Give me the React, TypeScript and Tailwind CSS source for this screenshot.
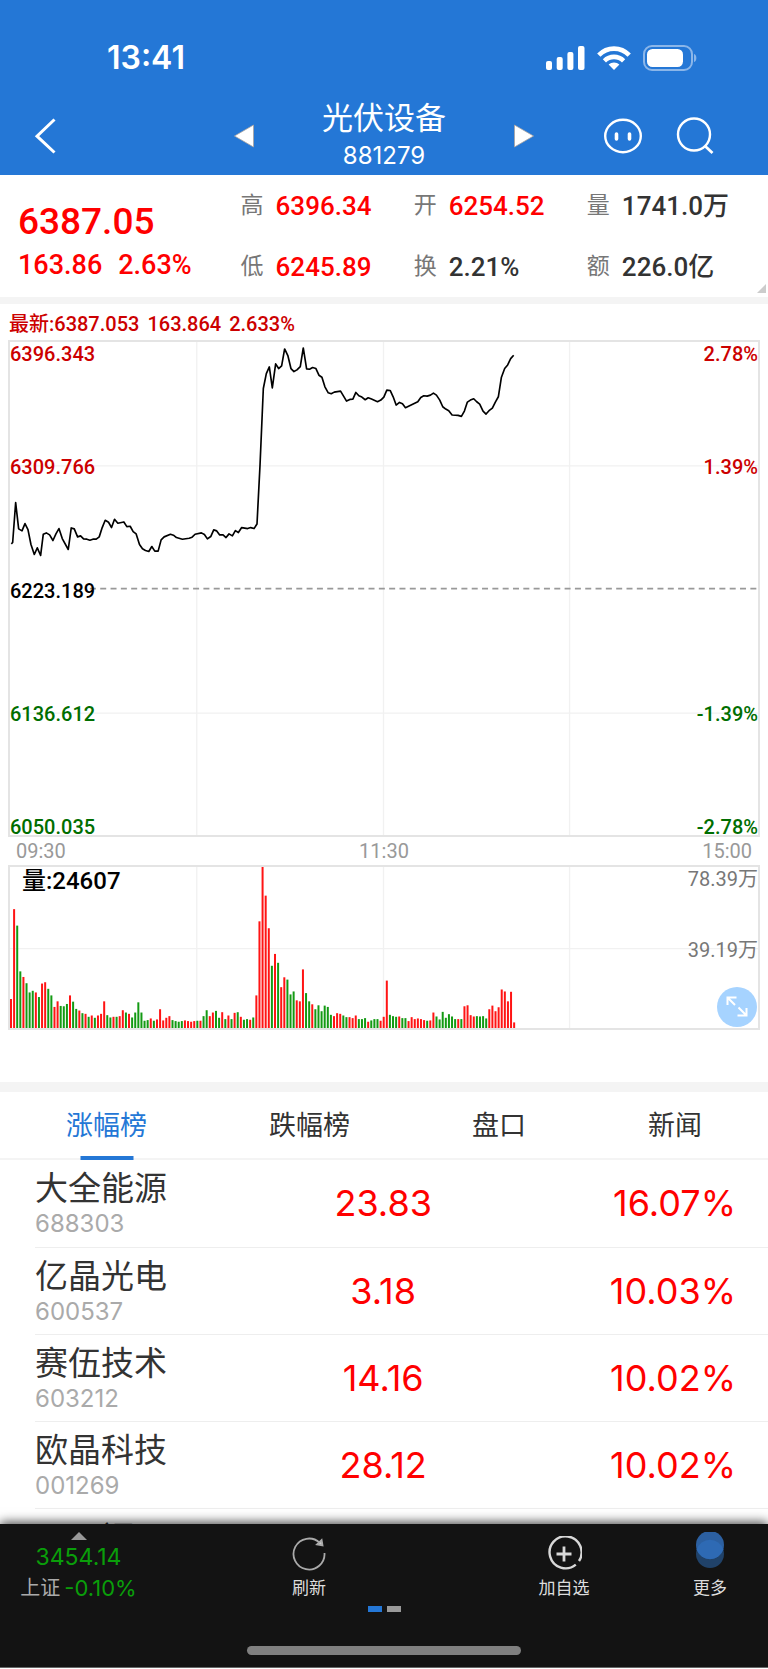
import type { ReactNode } from "react";

const quotes = [
  { label: "高", value: "6396.34", up: true },
  { label: "开", value: "6254.52", up: true },
  { label: "量", value: "1741.0万", up: false },
  { label: "低", value: "6245.89", up: true },
  { label: "换", value: "2.21%", up: false },
  { label: "额", value: "226.0亿", up: false },
];

const stocks = [
  { name: "大全能源", code: "688303", price: "23.83", change: "16.07%" },
  { name: "亿晶光电", code: "600537", price: "3.18", change: "10.03%" },
  { name: "赛伍技术", code: "603212", price: "14.16", change: "10.02%" },
  { name: "欧晶科技", code: "001269", price: "28.12", change: "10.02%" },
];

const tabs = ["涨幅榜", "跌幅榜", "盘口", "新闻"];

// intraday price line
const priceLine =
  "33,626 37,622 46,502 55,581 65,587 74,565 83,583 92,628 102,658 111,638 121,661 129,597 138,593 148,599 158,616 167,596 176,580 186,610 204,643 213,578 222,581 232,605 241,602 250,611 260,612 269,615 278,612 288,612 297,605 306,577 315,555 325,561 334,577 343,552 353,564 371,560 380,574 390,573 399,589 408,596 418,628 427,641 436,646 446,649 455,634 464,648 474,648 483,614 492,605 511,597 520,600 529,607 547,612 567,609 576,606 585,597 604,593 613,598 622,611 632,604 641,584 650,587 659,599 669,599 678,607 687,596 697,602 706,586 715,592 725,577 743,580 752,577 762,580 771,566 780,390 790,158 799,113 808,93 817,156 827,84 836,98 845,90 854,39 864,60 873,98 882,107 891,102 901,92 910,36 920,99 929,100 938,95 948,98 957,118 966,124 975,153 985,171 994,174 1003,169 1022,166 1040,196 1050,191 1059,190 1068,170 1077,180 1086,184 1096,192 1105,186 1115,190 1133,198 1143,193 1152,184 1161,163 1171,164 1180,183 1189,208 1199,200 1208,204 1217,216 1254,198 1263,185 1272,180 1282,181 1292,178 1301,172 1310,178 1320,193 1329,213 1338,220 1347,225 1357,238 1375,239 1385,242 1394,226 1403,199 1412,193 1422,189 1431,198 1440,205 1450,226 1459,235 1468,225 1478,217 1487,199 1496,183 1505,125 1515,98 1524,87 1533,68 1542,58";

// volume per minute, negative when the price went down
const volumes = [
  88, 361, -311, -172, 155, -136, -108, -113, 108, -94, 135, 139, -119, -99, 64, 81, -67, -66, -73, 99, -80, -58, 53, -45,
  43, -34, 38, -31, 38, 43, 81, -39, -32, 34, -34, 36, 54, -47, 43, -32, -47, -78, -47, -22, -24, 29, -22, 26, 57, 23, 31,
  36, -24, -21, -19, -21, 23, 21, 19, 21, -22, 22, -36, -54, 36, 47, -52, -31, 48, -27, 38, -27, 46, -48, 34, -25, -27, 25,
  -32, 99, 324, 489, 402, 303, -189, 225, -198, 124, 154, -147, -102, -111, 84, 81, 178, -106, -81, 72, -57, -69, -51, -68,
  -64, -40, 36, 45, 43, -38, -33, 33, 30, 38, -27, -27, -30, 19, -23, -27, -27, 22, 34, 144, -40, -36, -34, 35, -30, -30,
  21, 33, 27, 29, 27, 24, -22, 23, 47, -35, -26, -49, -31, -42, -35, -27, 27, -27, 66, 69, 39, 35, -36, -35, -36, -29, 57,
  68, 51, 63, 117, 111, 81, 110, 17,
];

function StatusBar() {
  return (
    <div className="flex items-center justify-between pt-10 pl-[107px] pr-[71px]">
      <span className="text-[32px] leading-9 font-semibold">13:41</span>
      <div className="flex items-center gap-3">
        <svg className="h-6 w-[39px]" viewBox="0 0 39 24" fill="currentColor">
          <rect x="0" y="15" width="6" height="9" rx="2" />
          <rect x="10.7" y="11" width="6" height="13" rx="2" />
          <rect x="21.4" y="6" width="6" height="18" rx="2" />
          <rect x="32" y="0" width="6.5" height="24" rx="2" />
        </svg>
        <svg className="h-6 w-[34px]" viewBox="0 0 34 24" fill="none" stroke="currentColor" strokeWidth="4.6">
          <path d="M1.8 9.2C10.2 0.4 23.8 0.4 32.2 9.2" />
          <path d="M7.4 14.8C12.8 9.6 21.2 9.6 26.6 14.8" />
          <path d="M17 24L11.6 18.6C14.6 15.9 19.4 15.9 22.4 18.6Z" fill="currentColor" stroke="none" />
        </svg>
        <svg className="h-[26px] w-[54px]" viewBox="0 0 54 26" fill="none">
          <rect x="1" y="1" width="48" height="24" rx="8" stroke="#8bb6e9" strokeWidth="2" />
          <rect x="4" y="4" width="36" height="18" rx="5.5" fill="white" />
          <path d="M51 9C54.2 10 54.2 16 51 17Z" fill="#8bb6e9" />
        </svg>
      </div>
    </div>
  );
}

function NavBar() {
  return (
    <div className="grid grid-cols-[1fr_300px_1fr] items-center pt-[22px] px-[34px] pb-px">
      <button aria-label="返回" className="justify-self-start">
        <svg className="h-9 w-[22px]" viewBox="0 0 22 36" fill="none" stroke="white" strokeWidth="3">
          <path d="M20.5 1.5L3 18.2L20.5 34.5" />
        </svg>
      </button>
      <div className="flex items-center justify-between">
        <button aria-label="上一个">
          <svg className="h-6 w-5" viewBox="0 0 20 24">
            <path d="M19.5 1V23L0.5 12Z" fill="white" stroke="#a9a3a0" strokeWidth="0.8" />
          </svg>
        </button>
        <div className="flex flex-col items-center">
          <h1 className="text-[31px] leading-10 font-normal">光伏设备</h1>
          <span className="text-2xl leading-9">881279</span>
        </div>
        <button aria-label="下一个">
          <svg className="h-6 w-5" viewBox="0 0 20 24">
            <path d="M0.5 1V23L19.5 12Z" fill="white" stroke="#a9a3a0" strokeWidth="0.8" />
          </svg>
        </button>
      </div>
      <div className="flex justify-end gap-[34px] pr-5">
        <button aria-label="助手">
          <svg className="size-[38px]" viewBox="0 0 38 38" fill="none" stroke="white" strokeWidth="2.4" strokeLinecap="round">
            <ellipse cx="19" cy="19" rx="17.8" ry="16.2" />
            <path d="M12.5 17V22M25.5 17V22" strokeWidth="3.6" />
          </svg>
        </button>
        <button aria-label="搜索">
          <svg className="size-[38px]" viewBox="0 0 38 38" fill="none" stroke="white" strokeWidth="2.4">
            <circle cx="18" cy="17.5" r="16" />
            <path d="M29 29L36.5 36" strokeWidth="2.8" />
          </svg>
        </button>
      </div>
    </div>
  );
}

function Summary() {
  return (
    <section className="relative flex items-center border-b-7 border-[#f4f4f4] pt-[13px] pb-3 pl-[18px] pr-2 font-['Roboto','Noto_Sans_CJK_SC',sans-serif] font-medium">
      <div className="w-[30%] pt-2.5 text-[#ff0000]">
        <div className="text-[37px] leading-[46px]">6387.05</div>
        <div className="flex gap-4 text-[27px] leading-10">
          <span>163.86</span>
          <span>2.63%</span>
        </div>
      </div>
      <dl className="grid flex-1 grid-cols-3 gap-y-[25px]">
        {quotes.map((q) => (
          <div key={q.label} className="flex items-center gap-3 whitespace-nowrap leading-9">
            <dt className="text-[23px] font-normal text-[#777]">{q.label}</dt>
            <dd className={q.up ? "text-[26px] text-[#ff0000]" : "text-[26px] text-[#333]"}>{q.value}</dd>
          </div>
        ))}
      </dl>
      <svg className="absolute right-0.5 bottom-1 size-[9px]" viewBox="0 0 9 9">
        <path d="M9 0V9H0Z" fill="#ccc" />
      </svg>
    </section>
  );
}

function PriceChart() {
  return (
    <div className="relative border-2 border-[#e4e4e4] text-xl leading-6">
      <svg className="block h-[493px] w-full" viewBox="0 0 2247 1485" preserveAspectRatio="none" fill="none">
        <path d="M561 0V1485M1122 0V1485M1681 0V1485M0 373H2247M0 1118H2247" stroke="#f1f1f1" strokeWidth="4" />
        <path d="M240 743H2247" stroke="#999" strokeWidth="5" strokeDasharray="18 13" />
        <polyline points={priceLine} transform="translate(-29 -18)" stroke="black" strokeWidth="5" strokeLinejoin="round" />
      </svg>
      <span className="absolute top-0 left-0 text-[#c00]">6396.343</span>
      <span className="absolute top-1/4 left-0 -translate-y-[40%] text-[#c00]">6309.766</span>
      <span className="absolute top-1/2 left-0 -translate-y-[40%] text-black">6223.189</span>
      <span className="absolute top-3/4 left-0 -translate-y-[40%] text-[#006e00]">6136.612</span>
      <span className="absolute bottom-0 left-0 leading-4 text-[#006e00]">6050.035</span>
      <span className="absolute top-0 right-0 text-[#c00]">2.78%</span>
      <span className="absolute top-1/4 right-0 -translate-y-[40%] text-[#c00]">1.39%</span>
      <span className="absolute top-3/4 right-0 -translate-y-[40%] text-[#006e00]">-1.39%</span>
      <span className="absolute right-0 bottom-0 leading-4 text-[#006e00]">-2.78%</span>
    </div>
  );
}

function VolumeChart() {
  return (
    <div className="relative border-2 border-[#e4e4e4] text-xl leading-6 font-normal text-[#777]">
      <svg className="block h-[161px] w-full" viewBox="0 0 2247 489" preserveAspectRatio="none">
        <path d="M561 0V489M1122 0V489M1681 0V489M0 248H2247" stroke="#f1f1f1" strokeWidth="4" />
        {volumes.map((v, i) => (
          <rect key={i} x={i * 9.33} y={489 - Math.abs(v)} width="6" height={Math.abs(v)} fill={v > 0 ? "#ff1414" : "#139a13"} />
        ))}
      </svg>
      <span className="absolute top-0 left-3 text-2xl leading-7 font-medium text-black">量:24607</span>
      <span className="absolute top-0 right-0">78.39万</span>
      <span className="absolute top-1/2 right-0 -translate-y-[40%]">39.19万</span>
      <button aria-label="全屏" className="absolute right-px bottom-px rounded-full bg-[#a6d3ff]">
        <svg className="size-10" viewBox="0 0 40 40" fill="none" stroke="white" strokeWidth="2">
          <path d="M10.5 18V10.5H19.5M11 11L18 18M29.5 21V28.5H20.5M29 28L21.5 20.5" />
        </svg>
      </button>
    </div>
  );
}

function ChartSection() {
  return (
    <section className="border-b-10 border-[#f4f4f4] px-2 pb-[52px] font-['Roboto','Noto_Sans_CJK_SC',sans-serif] font-medium">
      <div className="flex gap-2 pt-1 pl-px text-xl leading-8 text-[#c00]">
        <span>最新:6387.053</span>
        <span>163.864</span>
        <span>2.633%</span>
      </div>
      <PriceChart />
      <div className="grid grid-cols-3 px-2 text-xl leading-7 font-normal text-[#999]">
        <span>09:30</span>
        <span className="text-center">11:30</span>
        <span className="text-right">15:00</span>
      </div>
      <VolumeChart />
    </section>
  );
}

function StockList() {
  return (
    <section>
      <div className="flex justify-between border-b-2 border-[#f4f4f4] px-[66px]">
        {tabs.map((tab, i) => (
          <button key={tab} className={i === 0 ? "relative text-[#2477d6]" : "relative text-[#333]"}>
            <span className="block pt-0.5 text-[27px] leading-16">{tab}</span>
            {i === 0 && <span className="absolute -bottom-0.5 left-1/2 h-1 w-[53px] -translate-x-1/2 bg-[#2477d6]" />}
          </button>
        ))}
      </div>
      <div className="ml-[35px]">
        <table className="w-full table-fixed border-collapse">
          <tbody>
            {stocks.map((s) => (
              <tr key={s.code} className="h-[87px] border-b border-[#eee]">
                <td className="w-[30%] p-0">
                  <div className="pt-0.5 text-[33px] leading-10 text-[#333]">{s.name}</div>
                  <div className="text-2xl leading-8 text-[#aaa]">{s.code}</div>
                </td>
                <td className="w-[35%] p-0 text-center text-4xl text-[#ff0000]">{s.price}</td>
                <td className="w-[35%] p-0 pr-8 text-right text-4xl text-[#ff0000]">{s.change}</td>
              </tr>
            ))}
          </tbody>
        </table>
        {/* next row, only its top edge shows above the bottom bar */}
        <div className="h-[15px] overflow-hidden pt-2 pl-[66px] text-[33px] leading-[42px] text-[#333]">福</div>
      </div>
    </section>
  );
}

function Action({ label, children }: { label: string; children: ReactNode }) {
  return (
    <button className="flex flex-col items-center">
      {children}
      <span className="text-[17px] leading-6">{label}</span>
    </button>
  );
}

function BottomBar() {
  return (
    <footer className="relative border-b border-[#666] bg-[#131313] text-[#ddd] shadow-[0_-2px_10px_rgba(0,0,0,0.7)]">
      <div className="grid grid-cols-[157fr_304fr_206fr_86fr] pt-2 pr-[15px]">
        <div className="flex flex-col items-center">
          <svg className="h-2 w-4" viewBox="0 0 16 8">
            <path d="M8 0L16 8H0Z" fill="#999" />
          </svg>
          <span className="text-[23px] leading-[34px] text-[#0a9e0a]">3454.14</span>
          <div className="flex items-center gap-1 leading-7 whitespace-nowrap">
            <span className="text-xl text-[#aaa]">上证</span>
            <span className="text-[22px] text-[#0a9e0a]">-0.10%</span>
          </div>
        </div>
        <Action label="刷新">
          <svg className="mt-1 mb-1 size-9" viewBox="0 0 36 36" fill="none" stroke="#aaa" strokeWidth="1.8">
            <path d="M33.500 17A15.500 15.500 0 1 1 28.600 6.700" />
            <path d="M30.600 4L31.500 9.500L26 8.500Z" fill="#ccc" />
          </svg>
        </Action>
        <Action label="加自选">
          <svg className="mt-1 mb-1 size-9" viewBox="0 0 36 36" fill="none" stroke="#d8d8d8" strokeWidth="2.4">
            <path d="M33 25A16 16 0 1 0 29.800 28.600" />
            <path d="M18 10.500V25.500M10.500 18H25.500" strokeWidth="2.8" />
          </svg>
        </Action>
        <Action label="更多">
          <svg className="mb-2 h-9 w-7" viewBox="0 0 28 36">
            <circle cx="14" cy="22" r="14" fill="#204269" />
            <circle cx="14" cy="13" r="14" fill="#2c60a1" />
            <path d="M0.700 17.500A14 14 0 0 1 27.300 17.500A14 14 0 0 1 0.700 17.500Z" fill="#2e6ab4" />
          </svg>
        </Action>
      </div>
      <div className="flex justify-center gap-[5px] pt-1">
        <span className="h-1.5 w-3.5 bg-[#2477d6]" />
        <span className="h-1.5 w-3.5 bg-[#999]" />
      </div>
      <div className="mx-auto mt-[34px] mb-3 h-[9px] w-[274px] rounded-full bg-[#808080]" />
    </footer>
  );
}

export default function App() {
  return (
    <main className="w-full overflow-hidden bg-white font-['Inter','Noto_Sans_CJK_SC',sans-serif]">
      <header className="bg-[#2477d6] text-white">
        <StatusBar />
        <NavBar />
      </header>
      <Summary />
      <ChartSection />
      <StockList />
      <BottomBar />
    </main>
  );
}
